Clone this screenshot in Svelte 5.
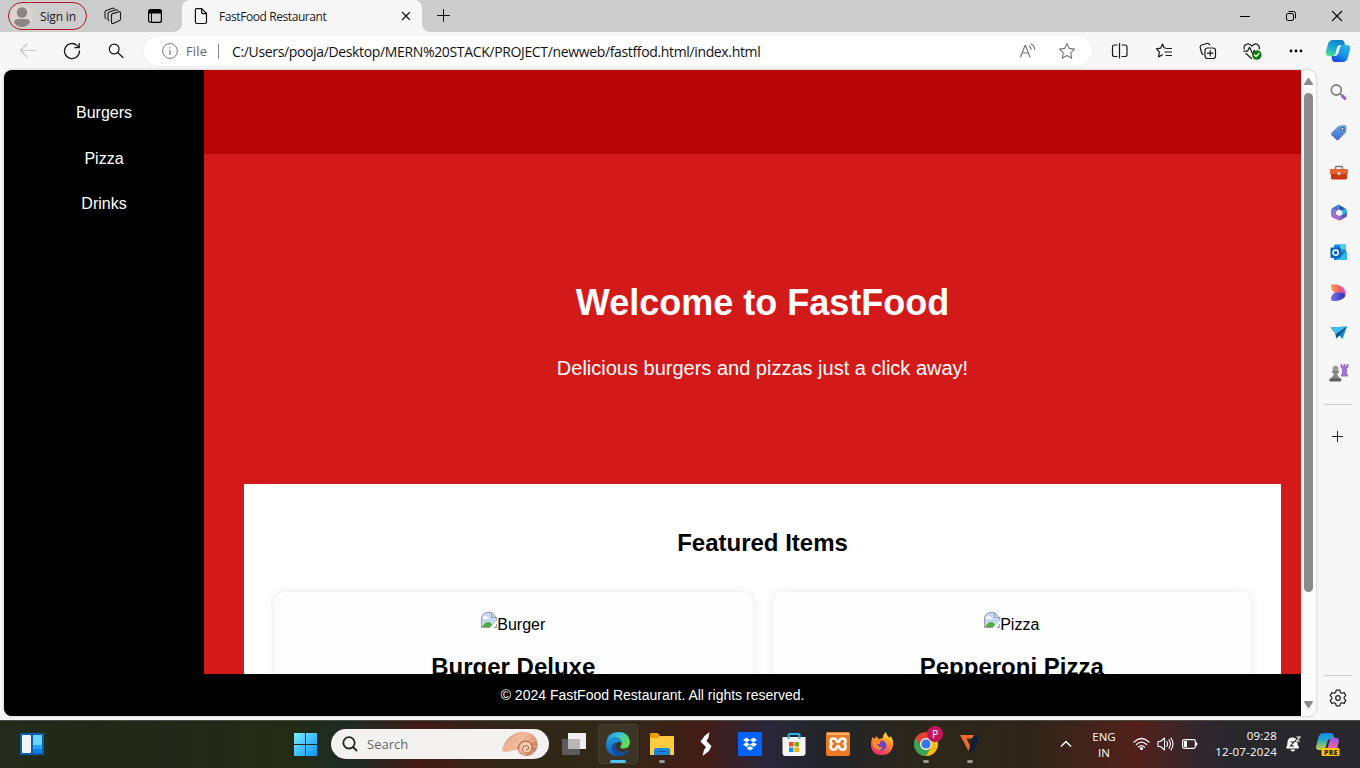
<script>
  const links = ['Burgers', 'Pizza', 'Drinks'];
  const items = [
    { alt: 'Burger', name: 'Burger Deluxe' },
    { alt: 'Pizza', name: 'Pepperoni Pizza' }
  ];
</script>

<div class="screen">
  <header class="titlebar">
    <div class="signin">
      <svg width="24" height="24" viewBox="0 0 24 24"><circle cx="12" cy="12" r="11.5" fill="#d9d6d2"/><circle cx="12" cy="8.500" r="5.200" fill="#8b8785"/><path d="M4 18.500Q4 15 8 15h8q4 0 4 3.500Q17 23 12 23t-8-4.500z" fill="#8b8785"/></svg>
      <span>Sign in</span>
    </div>
    <svg class="spaces" width="18" height="18" viewBox="0 0 18 18" fill="none" stroke="#1a1a1a" stroke-width="1.1" stroke-linejoin="round" stroke-linecap="round"><path d="M7.500 8.200Q7.500 7 8.600 6.600L15 4.700q1.500-.3 1.500 1.200v6q0 1.200-1 1.600l-6.300 2.900q-1.700.4-1.700-1.200zM4.800 13.600q-.8-.4-.8-1.600V6.800q0-1.300 1.200-1.700l6.700-2.300q1.200-.3 1.700.6M2 11.600q-1-.5-1-1.600V5.200Q1 4 2.200 3.500l6.300-2.200q1.300-.4 1.800.4"/></svg>
    <svg class="tabmenu" width="16" height="16" viewBox="0 0 16 16"><rect x="1.600" y="1.600" width="12.800" height="12.800" rx="2" fill="none" stroke="#000" stroke-width="1.200"/><path d="M1.500 5.500V3.200Q1.500 1.500 3.200 1.500h9.600q1.700 0 1.700 1.700v2.300z"/><path d="M4.500 5v9.500" stroke="#000" stroke-width="1"/></svg>
    <div class="tab">
      <svg width="14" height="18" viewBox="0 0 14 18" fill="none" stroke="#111" stroke-width="1.200" stroke-linejoin="round"><path d="M2.500 1.600h5.200l4.800 4.900v8.300q0 1.700-1.700 1.700H3q-1.600 0-1.600-1.700V3q0-1.400 1.100-1.400zM7.600 1.700v3.500q0 1.400 1.400 1.400h3.500"/></svg>
      <span>FastFood Restaurant</span>
      <svg class="tabclose" width="10" height="10" viewBox="0 0 10 10" stroke="#111" stroke-width="1.200"><path d="M1 1l8 8M9 1L1 9"/></svg>
    </div>
    <svg class="newtab" width="14" height="14" viewBox="0 0 14 14" stroke="#111" stroke-width="1"><path d="M6.500 0v13M0 6.500h13"/></svg>
    <div class="controls">
      <svg width="12" height="12" viewBox="0 0 12 12"><path d="M1 6.500h10" stroke="#000"/></svg>
      <svg width="12" height="12" viewBox="0 0 12 12" fill="none" stroke="#000" stroke-width="1"><rect x="1.500" y="3.500" width="7" height="7" rx="1.500"/><path d="M3.500 1.500h5q2 0 2 2v5"/></svg>
      <svg width="12" height="12" viewBox="0 0 12 12" stroke="#000" stroke-width="1.100"><path d="M1 1l10 10M11 1L1 11"/></svg>
    </div>
  </header>

  <div class="toolbar">
    <div class="cells">
      <svg width="18" height="18" viewBox="0 0 18 18" fill="none" stroke="#c8c8c8" stroke-width="1.200" stroke-linecap="round"><path d="M17 8.500H1.500M8 2L1.500 8.500 8 15"/></svg>
      <svg width="18" height="18" viewBox="0 0 18 18" fill="none" stroke="#1a1a1a" stroke-width="1.300" stroke-linecap="round"><path d="M16.500 9A7.500 7.500 0 1 1 14.200 3.600L16 5.500M16.200 1.500v4.200h-4.300"/></svg>
      <svg width="18" height="18" viewBox="0 0 18 18" fill="none" stroke="#1a1a1a" stroke-width="1.200" stroke-linecap="round"><circle cx="7.200" cy="7" r="4.900"/><path d="M10.900 10.700l5 4.800"/></svg>
    </div>
    <div class="address">
      <svg width="18" height="18" viewBox="0 0 18 18" fill="none" stroke="#777"><circle cx="9" cy="9" r="7.400"/><path d="M9 8v5M9 5.200v1.300" stroke-width="1.200"/></svg>
      <span class="file">File</span>
      <i class="sep"></i>
      <span class="url">C:/Users/pooja/Desktop/MERN%20STACK/PROJECT/newweb/fastffod.html/index.html</span>
      <svg class="read" width="18" height="18" viewBox="0 0 18 18" fill="none" stroke="#777" stroke-width="1.200" stroke-linecap="round"><path d="M1.500 15L6 3.500h.5L11 15M3 11h6.500M10.200 4.200q1.700 1 1.800 3.200M12 2q3.600 1.700 3.700 5.500"/></svg>
      <svg class="star" width="18" height="18" viewBox="0 0 18 18" fill="none" stroke="#777" stroke-width="1.100" stroke-linejoin="round"><path d="M9 1.500l2.300 4.900 5.300.7-3.900 3.700 1 5.400L9 13.600l-4.700 2.600 1-5.400L1.400 7.100l5.300-.7z"/></svg>
    </div>
    <div class="cells tools">
      <svg width="18" height="18" viewBox="0 0 18 18" fill="none" stroke="#1a1a1a" stroke-width="1.200"><path d="M6.500 3h-3Q1.500 3 1.500 5v7.500q0 2 2 2h3M10.500 3H14q2 0 2 2v7.500q0 2-2 2h-3.500M8.500 1v15.500"/></svg>
      <svg width="18" height="18" viewBox="0 0 18 18" fill="none" stroke="#1a1a1a" stroke-width="1.200" stroke-linecap="round" stroke-linejoin="round"><path d="M10.500 6L9.200 5.800 7.500 2 5.600 6.200l-4.200.6 3 3.100-.9 5L7.500 12.800M11.500 6.500h5M10 10h6.500M11 13.500h5.500"/></svg>
      <svg width="18" height="18" viewBox="0 0 18 18" fill="none" stroke="#1a1a1a" stroke-width="1.200" stroke-linecap="round"><rect x="6" y="6" width="10.500" height="10.500" rx="2.500"/><path d="M11.200 8.500v5.500M8.500 11.200H14M4 12.500q-1-.5-1.400-2L1.300 6Q.7 3.800 2.700 3l5.200-1.500q2-.5 2.900 1.500"/></svg>
      <svg width="20" height="18" viewBox="0 0 20 18" fill="none" stroke="#1a1a1a" stroke-width="1.200" stroke-linejoin="round" stroke-linecap="round"><path d="M2.200 7Q1.500 3.500 4.300 2.300 7.300 1 10 4.200q2.700-3.200 5.500-1.800Q18 4 17.200 7M1.800 9.200h3.700l2-4 3 6.300 1.800-3.300M4 11.500l5.500 5"/><circle cx="14.800" cy="13" r="4.800" fill="#107c10" stroke="none"/><path d="M12.500 13l1.600 1.500 2.900-3" stroke="#fff"/></svg>
      <svg width="18" height="18" viewBox="0 0 18 18"><circle cx="4" cy="9" r="1.400"/><circle cx="9" cy="9" r="1.400"/><circle cx="14" cy="9" r="1.400"/></svg>
    </div>
    <svg class="copilot" width="26" height="24" viewBox="0 0 26 24">
      <defs><linearGradient id="ca" x1=".7" y1="0" x2=".2" y2="1"><stop stop-color="#0a7fd0"/><stop offset=".55" stop-color="#1ca9d9"/><stop offset="1" stop-color="#54de85"/></linearGradient><linearGradient id="cb" x1=".8" y1="0" x2=".3" y2="1"><stop stop-color="#27b8e8"/><stop offset=".6" stop-color="#178ce8"/><stop offset="1" stop-color="#1748db"/></linearGradient></defs>
      <path d="M8 1h8.500q2 0 2.700 2L20 6h-4q-2 0-2.700 2l-2 6.500Q10.600 17 8 17H4Q0 17 1 12L3.200 4.500Q4.300 1 8 1z" fill="url(#ca)"/><path d="M18 23H10q-2.500 0-3-2.500L6.500 17H9q2 0 2.600-2l2-6.500Q14.300 6 16.500 6H22q4 0 3 4.500l-2.300 8.500q-1.200 4-4.700 4z" fill="url(#cb)"/><path d="M11.800 9.300Q12.800 6 16.500 6q-1.100.7-1.600 2.500l-1.400 5q-.9 3.500-5 3.500 1.600-.6 2.200-2.600z" fill="#fff"/>
    </svg>
  </div>

  <div class="body">
    <div class="viewport">
      <div class="page">
        <nav>{#each links as l}<a href="#{l}">{l}</a>{/each}</nav>
        <main>
          <div class="band"></div>
          <section class="hero">
            <h1>Welcome to FastFood</h1>
            <p>Delicious burgers and pizzas just a click away!</p>
          </section>
          <section class="featured">
            <h2>Featured Items</h2>
            <div class="cards">
              {#each items as it}
                <article>
                  <div class="pic">
                    <svg width="16" height="16" viewBox="0 0 16 16"><path d="M.5 15.500V6Q1 1.500 6 .5h4.500l5 5v10z" fill="#c5d8f7"/><path d="M2 5.500q2-3 4-.5 2 0 2 2H2z" fill="#fff"/><path d="M1 15q3-5 6-5 3 0 4 3l-2 2z" fill="#54ad35"/><path d="M9 16l7-7v3l-3.500 4z" fill="#fff"/><path d="M.5 15.500V6Q1 1.500 6 .5h4.500l5 5v3M.5 15.500H9M13 15.500h2.500V12M10.500.5v5h5" fill="none" stroke="#8f969e" stroke-width=".9"/></svg><span>{it.alt}</span>
                  </div>
                  <h3>{it.name}</h3>
                </article>
              {/each}
            </div>
          </section>
        </main>
        <footer>© 2024 FastFood Restaurant. All rights reserved.</footer>
      </div>
      <div class="scroll">
        <svg width="9" height="7" viewBox="0 0 9 7"><path d="M4.500 0Q5 0 5.400.6L9 6q.2 1-.7 1H.7Q-.2 7 0 6L3.600.6Q4 0 4.500 0z" fill="#8b8b8b"/></svg>
        <div class="thumb"></div>
        <svg width="9" height="7" viewBox="0 0 9 7"><path d="M4.500 7Q5 7 5.400 6.400L9 1q.2-1-.7-1H.7Q-.2 0 0 1L3.600 6.400Q4 7 4.500 7z" fill="#8b8b8b"/></svg>
      </div>
    </div>
    <aside>
      <div class="icons">
        <svg width="18" height="18" viewBox="0 0 18 18" fill="none"><circle cx="6.300" cy="6" r="5" stroke="#858585" stroke-width="1.800"/><path d="M10 9.700l2.300 2.200" stroke="#777" stroke-width="1.600"/><path d="M12.500 12l2.400 2.300" stroke="#9c63cf" stroke-width="3.200" stroke-linecap="round"/></svg>
        <svg width="18" height="18" viewBox="0 0 18 18"><defs><linearGradient id="tg" x2="0" y2="1"><stop stop-color="#6fa4e6"/><stop offset="1" stop-color="#4169cf"/></linearGradient></defs><path d="M8.500 1.800L14.800 1q1.700-.1 1.700 1.600l-.4 5.500L8.700 15.800q-1.200 1-2.400 0L1.600 11.200q-1.100-1.200 0-2.400z" fill="url(#tg)"/><circle cx="12.500" cy="4.900" r="1.500" fill="#fff" stroke="#2c4384"/></svg>
        <svg width="18" height="18" viewBox="0 0 18 18"><path d="M5.500 6V3.500q0-1 1-1h5q1 0 1 1V6" fill="none" stroke="#777" stroke-width="1.400"/><rect y="5" width="18" height="5.500" rx="1" fill="#e8632d"/><path d="M1 10h16v4q0 1.500-1.500 1.500h-13Q1 15.500 1 14z" fill="#c83a0d"/><circle cx="9" cy="9.500" r="1.700" fill="#c4cacb"/></svg>
        <svg width="18" height="18" viewBox="0 0 18 18"><path d="M2 4.500L8 .8l7 3.700-3 3-3-2-4 4v3L1.500 9z" fill="#4467c4"/><path d="M8 .8l7.500 3.500q1.500 1 1.500 3V12l-5 .5.5-5L7 4z" fill="#37a8e0"/><path d="M8.500.8L15 4.500 10 7z" fill="#3153ad"/><path d="M16.800 9v3.500l-7 4-4-3 5-2z" fill="#5759bd"/><path d="M1.200 5.500v6q0 1 1 2l7 3 3-3.500-6-2.500z" fill="#a269ca"/><path d="M1.200 5.500l5-.8v6.800L1.500 10.500z" fill="#8b79cf"/><circle cx="9" cy="8.500" r="2.800" fill="#f7f7f7"/></svg>
        <svg width="18" height="18" viewBox="0 0 18 18"><rect x="4" y=".5" width="12" height="10" rx="1" fill="#168ddc"/><path d="M10 .5h6v5h-6z" fill="#48d2ef"/><path d="M3 8l14 1v7H4z" fill="#1275ce"/><path d="M17 7.500V16H6z" fill="#31b8eb"/><rect x=".5" y="3.500" width="10.500" height="10.500" rx="1" fill="#0865b8"/><circle cx="5.700" cy="8.700" r="2.600" fill="none" stroke="#fff" stroke-width="1.500"/></svg>
        <svg width="18" height="18" viewBox="0 0 18 18"><defs><linearGradient id="da"><stop stop-color="#ffa23d"/><stop offset=".6" stop-color="#ef5974"/><stop offset="1" stop-color="#cf51dc"/></linearGradient><linearGradient id="db"><stop stop-color="#7774ed"/><stop offset="1" stop-color="#362dae"/></linearGradient></defs><path d="M1 1.500Q1 .2 2.500.2q6-.2 10.500 3.300Q18 9 14.500 13.500L10 9.500Q1 9.500 1 1.500z" fill="url(#da)"/><path d="M1 15q0-6 6-6.500 8-1 8 4-3.500 5-12.500 4.500Q1 16.800 1 15z" fill="url(#db)"/></svg>
        <svg width="18" height="18" viewBox="0 0 18 18"><path d="M.5 3.500L17 2.500 12.500 15 9.500 11.500 6 14.500l-.8-5.200z" fill="#168bcf"/><path d="M.5 3.500L17 2.500 6 10z" fill="#43bdea"/><path d="M6 14.500l.3-4.800L17 2.500 9.400 11.500z" fill="#0b4f83"/></svg>
        <svg width="20" height="18" viewBox="0 0 20 18"><path d="M11.500 0H13v1.500h1.500V0h2v1.500H18V0h1.500v3.500L18 4.500v5l1 1v2h-7v-2l1-1v-5l-1.500-1z" fill="#a474d4"/><circle cx="6.500" cy="4.800" r="3" fill="#999"/><path d="M3 7h7v2H8.200q0 3 2 4 1.300.5 1.500 3.500H1Q1.500 13.500 3 13q1.800-1 1.800-4H3z" fill="#858585"/><rect x=".3" y="14.500" width="12" height="3" rx="1" fill="#5e5e5e"/></svg>
      </div>
      <hr>
      <svg class="plus" width="14" height="14" viewBox="0 0 14 14" stroke="#222" stroke-width="1"><path d="M6.500 1v11M1 6.500h11"/></svg>
      <hr class="low">
      <svg class="gear" width="18" height="18" viewBox="0 0 18 18" fill="none" stroke="#222" stroke-width="1.200" stroke-linejoin="round"><path d="M7.200 1.200h3.600l.6 2.300 1.400.8 2.300-.7 1.700 3L15.200 8.200v1.600l1.600 1.600-1.700 3-2.300-.7-1.400.8-.6 2.300H7.200l-.6-2.300-1.400-.8-2.300.7-1.700-3L2.800 9.800V8.200L1.200 6.600l1.700-3 2.300.7 1.400-.8z"/><circle cx="9" cy="9" r="2.300"/></svg>
    </aside>
  </div>

  <div class="taskbar">
    <svg class="widgets" width="24" height="22" viewBox="0 0 24 22"><rect width="24" height="22" rx="1" fill="#0b5caf"/><rect x="2" y="2" width="9" height="18" rx="1" fill="#f3f3f3"/><path d="M13 2h9v10h-9z" fill="#67d6ff"/><path d="M13 12h9v4h-9z" fill="#25a2f5"/><path d="M13 16h9v4h-9z" fill="#0884e8"/></svg>
    <svg class="start" width="23" height="23" viewBox="0 0 23 23"><defs><linearGradient id="wg" x2="1" y2="1" gradientUnits="userSpaceOnUse" x1="0" y1="0" gradientTransform="scale(23)"><stop stop-color="#7defff"/><stop offset="1" stop-color="#0a94fa"/></linearGradient></defs><path d="M0 0h11v11H0zM12 0h11v11H12zM0 12h11v11H0zM12 12h11v11H12z" fill="url(#wg)"/></svg>
    <div class="search">
      <svg width="16" height="16" viewBox="0 0 16 16" fill="none" stroke="#262626" stroke-width="1.800" stroke-linecap="round"><circle cx="7" cy="6.800" r="5.700"/><path d="M11 11l3.500 3.500"/></svg>
      <span>Search</span>
      <svg class="shell" width="36" height="26" viewBox="0 0 36 26"><defs><linearGradient id="sg" x2="1" y2=".6"><stop stop-color="#df9877"/><stop offset=".5" stop-color="#efb998"/><stop offset="1" stop-color="#cc8061"/></linearGradient></defs><path d="M0 20Q2 8 12 3 22-1.500 30.500 3.500q7 6 4.500 14-4 8-11.500 7.500-7-1.500-8-6.500-3-.5-7 1.500-4 1.500-8.500 0z" fill="url(#sg)"/><path d="M3 17Q8 8 19 3.500M14 15q3-6 10-11M22 10l7-4.500M28 11l5-2M31 15l4 1M29 20l2 2M23 22v2" fill="none" stroke="#f7d5bd" stroke-width=".7"/><circle cx="24" cy="17" r="6" fill="#f3cdb0"/><path d="M16 18q.5-7.500 8-8 6.500 1 6 7-1 5.500-6 5-4-.5-3.500-4.500 1-3.500 4-3 2.500.8 2 3-.8 2-2.500 1.300" fill="none" stroke="#ad603f" stroke-width="1"/></svg>
    </div>
    <div class="apps">
      <div><svg width="24" height="24" viewBox="0 0 24 24"><rect y="7" width="18" height="16" fill="#5b5b5b"/><rect x="6" y="1" width="18" height="16" fill="#efefef"/><path d="M6 7h12v10H6z" fill="#b7b7b7"/></svg></div>
      <div class="active"><svg width="24" height="24" viewBox="0 0 24 24"><defs><linearGradient id="ea" x2="1" y2=".35"><stop stop-color="#1c8fd8"/><stop offset=".5" stop-color="#35bfe0"/><stop offset="1" stop-color="#62de50"/></linearGradient><linearGradient id="eb" x2="0" y2="1"><stop stop-color="#1c9ade"/><stop offset="1" stop-color="#0d5fc0"/></linearGradient></defs><path d="M.2 11Q1.500 0 12 0q11 0 12 9.500 0 6.500-6.500 7-3.300 0-3.300-1.500 0-.6.8-1.500.8-1.300.5-3Q14.500 6 9 5.500 3.500 5.500.2 11z" fill="url(#ea)"/><path d="M0 12.500Q1 6 7.500 5.800q6.300.2 8 4.700-4-2-6 1.500-1.300 4 2 6.500 5 3.500 11.500-.5Q18.500 24 12 24 .5 23.500 0 12.500z" fill="url(#eb)"/><path d="M9.300 12q-1.300 4 2.200 6.500 5 3.500 11.300-.2Q18.500 24 12.500 24 6 21.500 5.500 16.500 5.500 12 11 9.700q-1.200 1-1.700 2.300z" fill="#114a9e"/></svg><b></b></div>
      <div class="run"><svg width="24" height="22" viewBox="0 0 24 22"><path d="M0 1q0-1 1-1h7l2 3v4H0z" fill="#e5a000"/><path d="M0 5h8l2-2h13q1 0 1 1v18H0z" fill="#ffcc42"/><path d="M4 22v-5q0-2 2-2h12q2 0 2 2v5z" fill="#1587dc"/><path d="M8 18h8v1H8z" fill="#0a569f"/></svg><b></b></div>
      <div><svg width="12" height="24" viewBox="0 0 12 24"><path d="M9.500 0L8.500 5.500 6.500 9l5 5-2.500 5-6.500 5 1.500-6 2-3-5.500-5.500L4.500 4z" fill="#fff"/></svg></div>
      <div><svg width="24" height="24" viewBox="0 0 24 24"><path d="M0 0h24v24H0z" fill="#0062ff"/><path d="M8.500 5.500L12 8 8.500 10.300 5 8zM15.500 5.500L19 8l-3.500 2.300L12 8zM8.500 10.300L12 12.600 8.500 15 5 12.600zM15.500 10.300L19 12.600 15.500 15 12 12.600zM12 14l3.500 2.300L12 18.600l-3.500-2.300z" fill="#fff"/></svg></div>
      <div><svg width="24" height="24" viewBox="0 0 24 24"><path d="M.5 5h23v16q0 3-3 3h-17q-3 0-3-3z" fill="#f5f5f5"/><path d="M6.500 7V3q0-1 1-1h9q1 0 1 1v4" fill="none" stroke="#29afe9" stroke-width="2"/><path d="M7 10h4.500v4.500H7z" fill="#ef4d21"/><path d="M12.500 10H17v4.500h-4.500z" fill="#78ad12"/><path d="M7 15.500h4.500V20H7z" fill="#1497df"/><path d="M12.500 15.500H17V20h-4.500z" fill="#f5b50a"/></svg></div>
      <div><svg width="24" height="24" viewBox="0 0 24 24"><rect width="24" height="24" rx="2" fill="#ed7b25"/><path d="M1 1h22v2H1z" fill="#f8b473"/><path d="M7.500 6.500q2.500 0 3 2 .3 1.500 1.500 1.500t1.500-1.500q.5-2 3-2 3 0 3 2.700 0 1.500-1.300 2.500 1.300 1.300 1.300 3 0 3-3 3-2.500 0-3-2.200-.3-1.500-1.500-1.500t-1.500 1.500q-.5 2.200-3 2.200-3 0-3-3 0-1.700 1.300-3-1.300-1-1.300-2.500 0-2.700 3-2.700z" fill="none" stroke="#fff" stroke-width="2.600"/></svg></div>
      <div><svg width="24" height="24" viewBox="0 0 24 24"><defs><linearGradient id="fg" x1=".8" y1="0" x2=".3" y2="1"><stop stop-color="#fff042"/><stop offset=".4" stop-color="#ff9327"/><stop offset="1" stop-color="#f12570"/></linearGradient></defs><path d="M2.500 5L5 7l1-3 3 3q3-1 4-1-.5-3 3-6 0 3 4 6l.5-2Q24 8 23 14q-2 9-11 9Q2 23 1 14 .5 9 2.500 5z" fill="url(#fg)"/><path d="M8 9.500q3-2 7 .5 3 4 0 7-4 3.500-8-.5 3 .5 4-1.500-3.500 0-4-3z" fill="#7044bf"/><path d="M3 7q4-1 8 2-2 1-1 3H7q2 5 6 3-3 5-8 1Q1 12 3 7z" fill="#ff8d24"/></svg></div>
      <div class="run"><svg class="chrome" width="30" height="30" viewBox="0 0 30 30"><circle cx="13" cy="18" r="12" fill="#ea4335"/><path d="M2.600 12A12 12 0 0 0 13 30l5.200-9A6 6 0 0 1 7.800 21z" fill="#34a853"/><path d="M23.400 12H13a6 6 0 0 1 5.200 9L13 30a12 12 0 0 0 10.400-18z" fill="#fbbc05"/><circle cx="13" cy="18" r="6" fill="#fff"/><circle cx="13" cy="18" r="4.700" fill="#3478e5"/><circle cx="22" cy="8" r="8" fill="#c2185b"/><text x="19" y="12" font-size="10.500" font-family="Open Sans, sans-serif" fill="#fff">P</text></svg><b></b></div>
      <div class="run"><svg width="20" height="18" viewBox="0 0 20 18"><path d="M13 1h3.500L13 10l-3 7-1-1z" fill="#0f1c38"/><path d="M0 0h14l-2 3.500H6.500L10 11l-1.500 5z" fill="#f26b2b"/><path d="M16 0h4l-7 17H9l4.500-8z" fill="#101f40"/></svg><b></b></div>
    </div>
    <svg class="chev" width="12" height="8" viewBox="0 0 12 8" fill="none" stroke="#fff" stroke-width="1.500"><path d="M1 6.500l5-5 5 5"/></svg>
    <div class="lang"><span>ENG</span><span>IN</span></div>
    <div class="status">
      <svg width="17" height="16" viewBox="0 0 17 16" fill="none" stroke="#fff" stroke-width="1.200" stroke-linecap="round"><path d="M1 6q7.500-7 15 0M3.300 8.500q5.200-4.800 10.400 0M5.600 11q2.900-2.700 5.800 0"/><circle cx="8.500" cy="12.500" r="1" fill="#fff"/></svg>
      <svg width="17" height="16" viewBox="0 0 17 16" fill="none" stroke="#fff" stroke-width="1.100" stroke-linecap="round" stroke-linejoin="round"><path d="M1 5.500h2.500l4-3.500v12l-4-3.500H1zM9.800 5.500q1.500 2.500 0 5M12 3.700q2.700 4.300 0 8.600M14 2q4 6 0 12"/></svg>
      <svg width="17" height="16" viewBox="0 0 17 16"><rect x="1.600" y="3.600" width="12.800" height="8.800" rx="1.800" fill="none" stroke="#fff" stroke-width="1.200"/><path d="M3 5h3v6H3zM15 6q1.500.5 1.500 2T15 10z" fill="#fff"/></svg>
    </div>
    <div class="clock"><span>09:28</span><span>12-07-2024</span></div>
    <svg class="bell" width="16" height="16" viewBox="0 0 16 16"><path d="M1 11.500Q2.500 10 2.500 6.500 2.500 1.500 7.500 1.500q4 0 4.700 4 .4 4.500 1.800 6 .3 1-1 1H2q-1.300 0-1-1zM5.300 13.500h4.900q-.5 2-2.400 2t-2.500-2z" fill="#fff"/><path d="M5.500 6H9L5.500 10H9" fill="none" stroke="#222" stroke-width="1.100"/><path d="M10.500 1h4L11 5h4" fill="none" stroke="#28282c" stroke-width="2.200"/><path d="M11.500 1H15l-3.500 4H15" fill="none" stroke="#fff" stroke-width="1.100"/></svg>
    <svg class="pre" width="24" height="24" viewBox="0 0 24 24"><defs><linearGradient id="pa" x2="0" y2="1"><stop stop-color="#1687ea"/><stop offset=".4" stop-color="#26a9c7"/><stop offset="1" stop-color="#d1ce38"/></linearGradient><linearGradient id="pb" x2="0" y2="1"><stop stop-color="#9956e7"/><stop offset="1" stop-color="#f2619f"/></linearGradient></defs><path d="M7 1h8q2 0 2.700 3L19 7h-5q-2 0-3 4l-1.500 5q-.7 2-3.500 2H3q-4 0-2.500-5l2-8Q4 1 7 1z" fill="url(#pa)"/><path d="M15 6h5q4 0 2.500 5L21 17H11l3-9q.5-2 1-2z" fill="url(#pb)"/><rect x="5.500" y="16" width="18" height="8" rx="1.500" fill="#ffc60a"/><text x="8" y="22.600" font-size="7" font-weight="800" font-family="Open Sans, sans-serif" fill="#222" textLength="13.500">PRE</text></svg>
  </div>
</div>

<style>
  :global(body) { margin: 0; overflow: hidden; }
  * { box-sizing: border-box; }
  svg { display: block; flex: none; }
  .screen { width: 1360px; height: 768px; display: flex; flex-direction: column; background: #f7f7f7; font-family: "Open Sans", "Noto Sans", sans-serif; overflow: hidden; }
  .titlebar { height: 32px; background: #cdcdcd; display: flex; align-items: center; font-size: 12px; color: #1b1b1b; flex: none; }
  .signin { margin-left: 8px; width: 79px; height: 28px; border: 1px solid #b3191f; border-radius: 14px; display: flex; align-items: center; padding-left: 1px; gap: 6px; white-space: nowrap; letter-spacing: -.15px; }
  .spaces { margin-left: 17px; }
  .tabmenu { margin-left: 25px; }
  .tab { position: relative; margin-left: 19px; width: 240px; height: 32px; background: #f7f7f7; border-radius: 8px 8px 0 0; display: flex; align-items: center; padding: 0 11px 0 12px; }
  .tab::before, .tab::after { content: ""; position: absolute; bottom: 0; width: 8px; height: 8px; }
  .tab::before { left: -8px; background: radial-gradient(circle at 0 0, #cdcdcd 7.500px, #f7f7f7 8px); }
  .tab::after { right: -8px; background: radial-gradient(circle at 100% 0, #cdcdcd 7.500px, #f7f7f7 8px); }
  .tab span { margin-left: 11px; letter-spacing: -.42px; white-space: nowrap; }
  .tabclose { margin-left: auto; }
  .newtab { margin-left: 15px; }
  .controls { margin-left: auto; display: grid; grid-template-columns: repeat(3, 46px); place-items: center; }
  .toolbar { height: 38px; flex: none; display: flex; align-items: center; padding: 0 0 0 6px; }
  .cells { display: grid; grid-template-columns: repeat(3, 44px); place-items: center; }
  .tools { grid-template-columns: repeat(5, 44px); margin-left: 6px; }
  .address { margin-left: 6px; width: 948px; height: 30px; border-radius: 15px; background: #fff; display: flex; align-items: center; padding-left: 17px; box-shadow: 0 0 2px #e2e2e2; font-size: 13px; }
  .file { margin-left: 7px; color: #666; width: 21px; letter-spacing: .15px; }
  .sep { width: 1px; height: 15px; background: #888; margin-left: 11px; }
  .url { margin-left: 13px; color: #111; font-size: 14px; letter-spacing: -.352px; white-space: nowrap; }
  .read { margin-left: auto; }
  .star { margin: 0 16px 0 21px; }
  .copilot { margin-left: 7px; }
  .body { height: 650px; display: flex; flex: none; padding-left: 4px; }
  .viewport { width: 1312px; height: 646px; border-radius: 8px; overflow: hidden; display: flex; box-shadow: 0 0 3px #bbb; background: #fcfcfc; }
  .page { width: 1297px; height: 646px; position: relative; display: flex; overflow: hidden; font-family: "Liberation Sans", Arial, sans-serif; }
  nav { width: 200px; background: #000; padding-top: 20.300px; flex: none; }
  nav a { display: block; color: #fff; text-decoration: none; text-align: center; font-size: 16px; line-height: 18px; padding: 13.750px 0; }
  main { width: 1097px; background: #d31a1a; }
  .band { height: 84px; background: #b80505; }
  .hero { height: 330px; padding: 128px 0 0 20px; color: #fff; text-align: center; }
  h1 { font-size: 36px; line-height: 41px; margin: 0; }
  .hero p { font-size: 20px; line-height: 23px; margin: 34px 0 0; }
  .featured { margin: 0 20px 0 40px; padding: 30px; background: #fff; height: 400px; text-align: center; color: #000; }
  h2 { font-size: 24px; line-height: 28px; margin: 15px 0 35px; }
  .cards { display: grid; grid-template-columns: 1fr 1fr; gap: 20px; }
  article { height: 260px; background: #fdfdfd; border-radius: 10px; padding-top: 20px; box-shadow: 0 0 10px rgba(0,0,0,.1); }
  .pic { display: flex; justify-content: center; height: 22px; line-height: 26px; font-size: 16px; }
  h3 { font-size: 24px; line-height: 28px; margin: 19px 0 0; }
  footer { position: absolute; left: 0; right: 0; bottom: 0; height: 42px; line-height: 43px; background: #000; color: #fff; text-align: center; font-size: 14px; }
  .scroll { width: 15px; display: flex; flex-direction: column; align-items: center; padding: 8px 0 8px; }
  .thumb { width: 9px; height: 499px; border-radius: 5px; background: #8b8b8b; margin: 8px 0 auto; }
  aside { width: 44px; display: flex; flex-direction: column; align-items: center; }
  .icons { display: grid; grid-template-rows: repeat(8, 40px); place-items: center; margin-top: 3px; padding-left: 1px; }
  hr { width: 28px; height: 1px; border: 0; background: #cfcfcf; margin: 11px 0 0; flex: none; }
  .plus { margin-top: 25px; }
  .low { margin-top: auto; }
  .gear { margin: 13px 0 13px; }
  .taskbar { height: 48px; flex: none; border-top: 1px solid #494b46; padding-bottom: 1px; display: flex; align-items: center; color: #fff; background: linear-gradient(90deg, #232b1c 0, #202915 90px, #24281a 170px, #232c14 290px, #1d2b26 350px, #431a16 420px, #302616 500px, #302916 610px, #431c15 705px, #29263a 765px, #232529 830px, #2b2719 930px, #2e2518 1030px, #53201b 1140px, #33262c 1195px, #28282c 1230px); }
  .widgets { margin-left: 20px; }
  .start { margin-left: 250px; }
  .search { margin-left: 14px; width: 218px; height: 30px; background: #f3f2f1; border-radius: 15px; display: flex; align-items: center; padding: 0 11px; font-size: 13px; color: #666; }
  .search span { margin-left: 9px; }
  .shell { margin-left: auto; }
  .apps { display: grid; grid-template-columns: repeat(10, 44px); margin-left: 3px; }
  .apps div { position: relative; height: 40px; width: 40px; margin-left: 2px; display: flex; align-items: center; justify-content: center; }
  .apps .active { background: #3c3526; border-radius: 4px; box-shadow: 0 0 0 1px #443e30 inset; }
  .apps b { position: absolute; bottom: 1px; left: 17px; width: 6px; height: 3px; border-radius: 2px; background: #999; }
  .apps .active b { width: 16px; left: 12px; background: #4cc2ff; }
  .chrome { margin: -6px 0 0 4px; }
  .chev { margin-left: 68px; }
  .lang { width: 32px; margin-left: 16px; text-align: center; padding-top: 2px; }
  .lang, .clock { display: flex; flex-direction: column; font-size: 11.500px; line-height: 16px; }
  .status { display: flex; gap: 7px; margin-left: 13px; }
  .clock { width: 70px; align-items: flex-end; margin-left: 9px; white-space: nowrap; letter-spacing: .18px; }
  .bell { margin-left: 8px; }
  .pre { margin-left: 15px; }
</style>
